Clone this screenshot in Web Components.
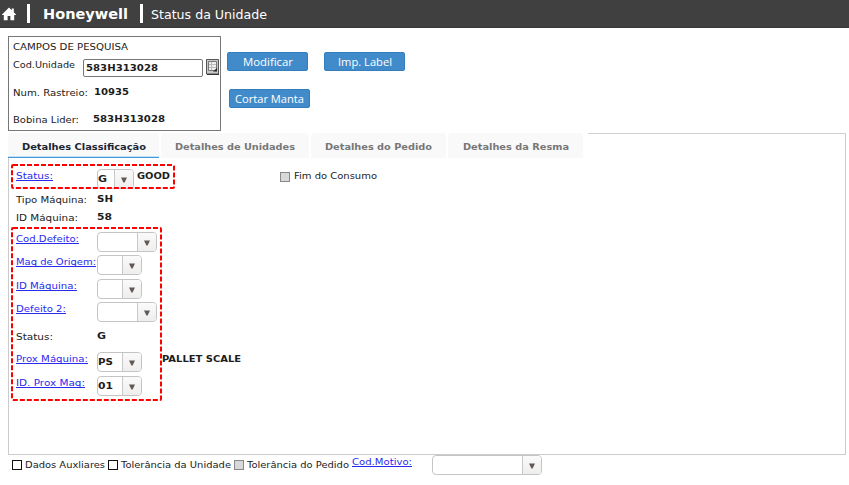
<!DOCTYPE html>
<html lang="pt">
<head>
<meta charset="utf-8">
<title>Status da Unidade</title>
<style>
html,body{margin:0;background:#fff}
body{width:849px;height:485px;overflow:hidden;font:9.3px/14px "DejaVu Sans",Verdana,sans-serif;color:#222}
</style>
</head>
<body>
<unit-page></unit-page>
<script>
const define = (name, html, setup) => customElements.define(name, class extends HTMLElement {
  connectedCallback() {
    if (this.shadowRoot) return;
    const t = document.createElement('template');
    t.innerHTML = html;
    this.attachShadow({mode: 'open'}).append(t.content.cloneNode(true));
    if (setup) setup(this, this.shadowRoot);
  }
});

// A single line of text; "w" stretches it to that many pixels.
define('ui-text', `<style>
:host{display:block;flex:none;white-space:nowrap}
:host([bold]){font-weight:bold;color:#1c1c1c}
:host([link]){color:#2a2aee}
:host([link]) span{text-decoration:underline;text-underline-offset:1px;text-decoration-thickness:1px;text-decoration-skip-ink:none}
span{display:inline-block;transform-origin:0 0}
</style><span><slot></slot></span>`, (el, root) => {
  const w = +el.getAttribute('w');
  if (!w) return;
  const s = root.querySelector('span');
  const scale = w / s.getBoundingClientRect().width;
  s.style.transform = 'scaleX(' + scale.toFixed(4) + ')';
  el.style.width = w + 'px';
});

define('ui-combo', `<style>
:host{display:flex;flex:none;box-sizing:border-box;height:20px;border:1px solid #c4c4c4;border-radius:4px;background:#fff;overflow:hidden}
.v{flex:1;min-width:0;padding:2px 0 0 0}
.b{width:18px;border-left:1px solid #c8c8c8;background:linear-gradient(#fafafa,#eee);display:flex;justify-content:center;align-items:center}
svg{display:block;margin-top:2px}
</style><div class="v"><slot></slot></div><div class="b"><svg width="6" height="6"><path d="M0 .5H6L3.6 5.5H2.4Z" fill="#625a55"/></svg></div>`);

define('ui-check', `<style>
:host{display:block;flex:none;box-sizing:border-box;width:10px;height:10px;border:1px solid #111;background:#fff}
:host([off]){border-color:#888;background:#d8d8d8}
</style>`);

define('ui-button', `<style>
:host{display:flex;flex:none;box-sizing:border-box;width:81px;height:19px;border:1px solid #357ebd;border-radius:2px;background:#428bca;color:#fff;justify-content:center;align-items:center;font:11.5px/17px "Open Sans","Noto Sans",sans-serif}
</style><slot></slot>`);

define('ui-tab', `<style>
:host{display:flex;flex:none;box-sizing:border-box;height:25px;border-radius:4px 4px 0 0;background:#f9f9f9;color:#777;font-weight:bold;align-items:center;justify-content:center;padding-top:2px}
:host([active]){color:#1a2433;border-radius:4px 4px 0 0;background:linear-gradient(#f9f9f9 23px,#c4e1f5 23px 24px,#3d9bdc 24px)}
</style><slot></slot>`);

define('form-row', `<style>
:host{display:grid;grid-template-columns:81px auto auto auto;justify-content:start;align-items:start}
</style><slot></slot>`);

// Dashed red frame laid over the fields it points out.
define('ui-mark', `<style>
:host{position:absolute;pointer-events:none}
svg{display:block;width:100%;height:100%}
rect{x:1px;y:1px;width:calc(100% - 2px);height:calc(100% - 2px);fill:none;stroke:#f00;stroke-width:2px;stroke-dasharray:5 2}
</style><svg><rect rx="1"/></svg>`);

define('app-header', `<style>
:host{display:flex;align-items:center;box-sizing:border-box;height:28px;background:#404040;border-bottom:1px solid #383838;color:#fff}
.bar{width:3px;height:19px;background:#fff}
svg{margin:0 11px 0 2px}
.n{margin:1px 12px 0 13px;font:bold 13.500px/20px "DejaVu Sans",sans-serif}
.t{margin:2px 0 0 8px;font:12.500px/20px "DejaVu Sans",sans-serif}
</style>
<svg width="14" height="14" viewBox="0 0 14 14"><path d="M7 .5 9.8 3.3V1.500h2v3.800L14 7.500V8h-1.800v5.200H8.400V9H5.600v4.200H1.800V8H0v-.5Z" fill="#fff"/></svg>
<div class="bar"></div>
<ui-text class="n" w="85">Honeywell</ui-text>
<div class="bar"></div>
<ui-text class="t" w="116">Status da Unidade</ui-text>`);

define('search-box', `<style>
:host{display:block;box-sizing:border-box;width:213px;height:95px;border:1px solid #777;padding:3px 0 0 4px;flex:none}
.r{display:flex;align-items:flex-start}
.in{box-sizing:border-box;width:120px;height:18px;border:1px solid #777;border-radius:2px;margin:1px 3px 0 8px;padding:1px 0 0 2px}
svg{margin-top:1px;display:block}
</style>
<div class="r" style="height:18px"><ui-text w="115">CAMPOS DE PESQUISA</ui-text></div>
<div class="r" style="height:28px"><ui-text w="62">Cod.Unidade</ui-text><div class="in"><ui-text bold w="72">583H313028</ui-text></div>
<svg width="13" height="16"><path d="M.5 .5h12v14.500h-12z" fill="#c8c8c8" stroke="#555"/><path d="M2.500 2.500h8v9h-8z" fill="#eee" stroke="#777"/><path d="M3 5.500h7M3 8.500h7M5.500 3v8" stroke="#bbb"/><path d="M7 12.500h4V9z" fill="#222"/><path d="M1 15.500h12" stroke="#333"/></svg></div>
<div class="r" style="height:27px"><ui-text w="75">Num. Rastreio:</ui-text><ui-text bold w="35" style="margin:-1px 0 0 6px">10935</ui-text></div>
<div class="r"><ui-text w="66">Bobina Lider:</ui-text><ui-text bold w="72" style="margin:-1px 0 0 14px">583H313028</ui-text></div>`);

define('detail-form', `<style>
:host{display:block;position:relative;box-sizing:border-box;width:838px;height:297px;margin-left:8px;border:1px solid #ccc;border-top:0;padding:11px 0 0 7px}
.up{margin-top:-1px}
.cb{display:flex;margin-left:110px}
</style>
<form-row style="height:24px"><ui-text link w="37">Status:</ui-text><ui-combo style="width:37px"><ui-text bold w="9">G</ui-text></ui-combo><ui-text bold w="33" style="margin-left:3px">GOOD</ui-text><div class="cb"><ui-check off style="margin:3px 4px 0 0"></ui-check><ui-text w="83">Fim do Consumo</ui-text></div></form-row>
<form-row style="height:18px"><ui-text w="71">Tipo Máquina:</ui-text><ui-text class="up" bold w="16">SH</ui-text></form-row>
<form-row style="height:21px"><ui-text w="62">ID Máquina:</ui-text><ui-text class="up" bold w="15">58</ui-text></form-row>
<form-row style="height:23px"><ui-text link w="63">Cod.Defeito:</ui-text><ui-combo style="width:60px"></ui-combo></form-row>
<form-row style="height:24px"><ui-text link w="80">Maq de Origem:</ui-text><ui-combo style="width:45px"></ui-combo></form-row>
<form-row style="height:23px"><ui-text link w="61">ID Máquina:</ui-text><ui-combo style="width:45px"></ui-combo></form-row>
<form-row style="height:28px"><ui-text link w="50">Defeito 2:</ui-text><ui-combo style="width:60px"></ui-combo></form-row>
<form-row style="height:22px"><ui-text w="37">Status:</ui-text><ui-text class="up" bold w="9">G</ui-text></form-row>
<form-row style="height:24px"><ui-text link w="72">Prox Máquina:</ui-text><ui-combo style="width:45px"><ui-text bold w="15">PS</ui-text></ui-combo><ui-text bold w="79" style="margin-left:20px">PALLET SCALE</ui-text></form-row>
<form-row><ui-text link w="69">ID. Prox Maq:</ui-text><ui-combo style="width:45px"><ui-text bold w="15">01</ui-text></ui-combo></form-row>
<ui-mark style="left:2px;top:6px;width:164px;height:25px"></ui-mark>
<ui-mark style="left:2px;top:69px;width:151px;height:174px"></ui-mark>`);

define('unit-page', `<style>
:host{display:block}
.search{display:flex;padding:8px 0 0 8px;height:97px}
.actions{display:grid;grid-template-columns:97px auto;align-content:start;row-gap:18px;padding:16px 0 0 6px}
.tabs{display:flex;margin-left:8px;height:25px;gap:2px}
.line{width:258px;margin-left:3px;box-sizing:border-box;border-top:1px solid #d0d0d0;border-right:1px solid #ccc}
.foot{display:flex;padding-left:12px;align-items:flex-start}
.foot ui-check{margin:5px 3px 0 0}
.foot .l{margin:3px 3px 0 0}
</style>
<app-header></app-header>
<div class="search"><search-box></search-box>
<div class="actions"><ui-button><ui-text w="50">Modificar</ui-text></ui-button><ui-button><ui-text w="54">Imp. Label</ui-text></ui-button><ui-button style="margin-left:2px"><ui-text w="69">Cortar Manta</ui-text></ui-button></div></div>
<div class="tabs">
<ui-tab active style="width:151px"><ui-text w="124">Detalhes Classificação</ui-text></ui-tab>
<ui-tab style="width:148px"><ui-text w="120">Detalhes de Unidades</ui-text></ui-tab>
<ui-tab style="width:135px"><ui-text w="107">Detalhes do Pedido</ui-text></ui-tab>
<ui-tab style="width:135px"><ui-text w="106">Detalhes da Resma</ui-text></ui-tab>
<div class="line"></div></div>
<detail-form></detail-form>
<div class="foot">
<ui-check></ui-check><ui-text class="l" w="80">Dados Auxliares</ui-text>
<ui-check></ui-check><ui-text class="l" w="110">Tolerância da Unidade</ui-text>
<ui-check off></ui-check><ui-text class="l" w="102">Tolerância do Pedido</ui-text>
<ui-text link w="60">Cod.Motivo:</ui-text><ui-combo style="width:110px;margin:0 0 0 20px"></ui-combo>
</div>`);
</script>
</body>
</html>
